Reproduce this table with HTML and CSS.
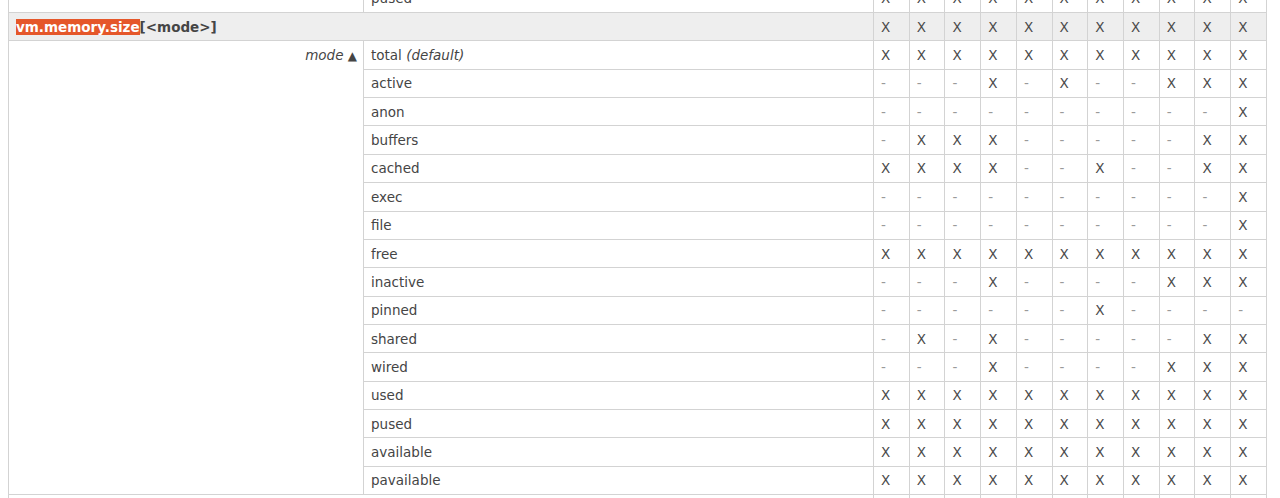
FILE: index.html
```html
<!DOCTYPE html>
<html>
<head>
<meta charset="utf-8">
<link rel="stylesheet" href="styles.css">
</head>
<body>
<div class="page">
<table class="grid">
<colgroup>
<col class="c-label"><col class="c-value">
<col class="c-x"><col class="c-x"><col class="c-x"><col class="c-x"><col class="c-x"><col class="c-x"><col class="c-x"><col class="c-x"><col class="c-x"><col class="c-x"><col class="c-x">
</colgroup>
<tbody id="body">
</tbody>
</table>
</div>
<script src="app.js"></script>
</body>
</html>
```

FILE: styles.css
```css
html, body {
  margin: 0;
  padding: 0;
  background: #ffffff;
}
.page {
  padding: 0 8px;
  overflow: hidden;
  height: 498px;
}
.grid {
  border-collapse: collapse;
  table-layout: fixed;
  width: 1258px;
  margin-top: -16.37px;
  font-family: "DejaVu Sans", Verdana, sans-serif;
  font-size: 13.5px;
  color: #454545;
}
.c-label { width: 355px; }
.c-value { width: 510px; }
.c-x { width: 35.73px; }
.grid td {
  border: 1px solid #d3d3d3;
  height: 28.37px;
  padding: 0 7px;
  box-sizing: border-box;
  line-height: 16px;
  vertical-align: middle;
  white-space: nowrap;
}
.grid tr.item td {
  background: #eeeeee;
}
.grid td.name {
  font-weight: bold;
  padding-left: 7px;
}
.hl {
  background: #e5572a;
  color: #ffffff;
}
.grid td.param {
  text-align: right;
  vertical-align: top;
  font-style: italic;
  padding-top: 6px;
  padding-right: 6px;
}
.arrow {
  font-style: normal;
  font-size: 12px;
}
.def {
  font-style: italic;
}
.grid td.label {
  padding-left: 7px;
}
.grid td.x {
  color: #4a4a4a;
  padding-left: 7px;
}
.grid td.dash {
  color: #9a9a9a;
  padding-left: 7px;
}
.grid tr.next td {
  background: #ffffff;
}
```

FILE: app.js
```js
var rows = [
  ["total", "XXXXXXXXXXX"],
  ["active", "---X-X--XXX"],
  ["anon", "----------X"],
  ["buffers", "-XXX-----XX"],
  ["cached", "XXXX--X--XX"],
  ["exec", "----------X"],
  ["file", "----------X"],
  ["free", "XXXXXXXXXXX"],
  ["inactive", "---X----XXX"],
  ["pinned", "------X----"],
  ["shared", "-X-X-----XX"],
  ["wired", "---X----XXX"],
  ["used", "XXXXXXXXXXX"],
  ["pused", "XXXXXXXXXXX"],
  ["available", "XXXXXXXXXXX"],
  ["pavailable", "XXXXXXXXXXX"]
];
function cells(s) {
  var h = "";
  for (var i = 0; i < s.length; i++) {
    if (s[i] === "X") h += '<td class="x">X</td>';
    else h += '<td class="dash">-</td>';
  }
  return h;
}
var html = "";
html += '<tr><td></td><td class="label">pused</td>' + cells("XXXXXXXXXXX") + '</tr>';
html += '<tr class="item"><td class="name" colspan="2"><span class="hl">vm.memory.size</span>[&lt;mode&gt;]</td>' + cells("XXXXXXXXXXX") + '</tr>';
rows.forEach(function (r, i) {
  html += '<tr>';
  if (i === 0) html += '<td class="param" rowspan="' + rows.length + '">mode <span class="arrow">&#9650;</span></td>';
  var label = r[0] === "total" ? 'total <span class="def">(default)</span>' : r[0];
  html += '<td class="label">' + label + '</td>' + cells(r[1]) + '</tr>';
});
html += '<tr class="next"><td colspan="2"></td>' + cells("XXXXXXXXXXX") + '</tr>';
document.getElementById("body").innerHTML = html;
```
